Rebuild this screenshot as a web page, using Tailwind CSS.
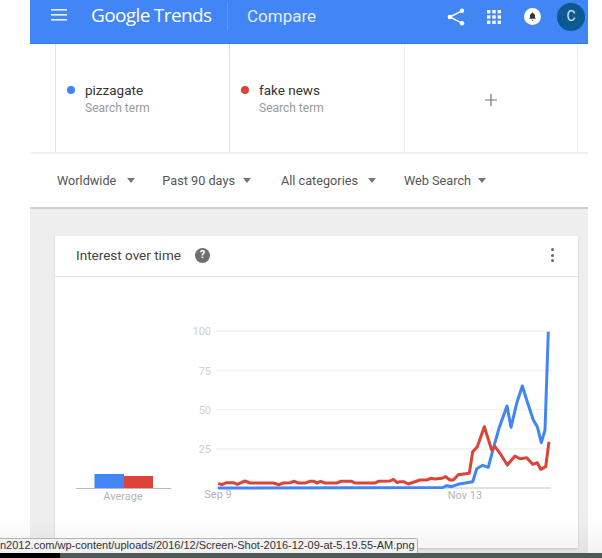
<!DOCTYPE html>
<html lang="en">
  <head>
    <meta charset="UTF-8" />
    <title>Google Trends - Compare</title>
    <script src="https://cdn.jsdelivr.net/npm/@tailwindcss/browser@4"></script>
  </head>
  <body class="bg-white font-['Roboto',sans-serif]">
    <div class="relative w-[602px] h-[558px] overflow-hidden bg-white">
      <main class="ml-[30px] w-[558px] h-[553px] flex flex-col bg-[#eeeeee]">
        <!-- Top bar -->
        <header class="h-[44px] shrink-0 flex items-center pb-[10px] bg-[#4285f4] border-b border-[#3b78dc] text-white">
          <svg class="ml-[21px] w-[16px] h-[12px] -mt-[3px]" viewBox="0 0 16 12" fill="#e8f0fe">
            <rect y="0" width="16" height="1.6" />
            <rect y="5" width="16" height="1.6" />
            <rect y="10" width="16" height="1.6" />
          </svg>
          <div class="ml-[24px] w-[122px] flex gap-[4px] items-baseline font-['Open_Sans',sans-serif] text-[19px] tracking-[-0.6px] -mt-[3px]">
            <span class="font-medium">Google</span><span class="font-normal">Trends</span>
          </div>
          <div class="ml-[14px] w-px h-[28px] bg-white/15"></div>
          <span class="ml-[19px] text-[17px] text-[#e3edfd]">Compare</span>
          <!-- share -->
          <svg class="ml-[131px] w-[18px] h-[18px]" viewBox="0 0 18 18" fill="white" stroke="white">
            <circle cx="15" cy="2.8" r="2.2" stroke="none" />
            <circle cx="2.8" cy="9" r="2.2" stroke="none" />
            <circle cx="15" cy="15.2" r="2.2" stroke="none" />
            <path d="M15 2.8 2.8 9 15 15.2" fill="none" stroke-width="1.5" />
          </svg>
          <!-- apps -->
          <svg class="ml-[22px] w-[14px] h-[14px]" viewBox="0 0 14 14" fill="white">
            <rect x="0" y="0" width="3.4" height="3.4" /><rect x="5.3" y="0" width="3.4" height="3.4" /><rect x="10.6" y="0" width="3.4" height="3.4" />
            <rect x="0" y="5.3" width="3.4" height="3.4" /><rect x="5.3" y="5.3" width="3.4" height="3.4" /><rect x="10.6" y="5.3" width="3.4" height="3.4" />
            <rect x="0" y="10.6" width="3.4" height="3.4" /><rect x="5.3" y="10.6" width="3.4" height="3.4" /><rect x="10.6" y="10.6" width="3.4" height="3.4" />
          </svg>
          <!-- notifications -->
          <div class="ml-[23px] w-[17px] h-[17px] rounded-full bg-white flex items-center justify-center">
            <svg class="w-[9px] h-[9px]" viewBox="0 0 10 10" fill="#333333">
              <path d="M5 0.5c.5 0 .8.3.8.8 1.4.4 2 1.5 2 2.9v2l1 1.2H1.200l1-1.200v-2c0-1.400.6-2.500 2-2.900 0-.5.3-.8.800-.8zM4 8.600h2a1 1 0 0 1-2 0z" />
            </svg>
          </div>
          <div class="ml-[16px] w-[28px] h-[28px] rounded-full bg-[#0b5a94] flex items-center justify-center text-[14px] text-[#dbe8f5]">C</div>
        </header>

        <!-- Search terms -->
        <section class="h-[110px] shrink-0 pl-[25px] flex bg-white border-b-2 border-[#f0f0f0]">
          <div class="w-[174px] border-l border-[#e2e2e2] flex items-center pl-[11px] gap-[10px]">
            <span class="w-[8px] h-[8px] rounded-full bg-[#4285f4] -mt-[17px]"></span>
            <div class="mt-[2px]">
              <div class="text-[13.500px] leading-[18px] text-[#333333]">pizzagate</div>
              <div class="text-[12px] leading-[18px] text-[#9a9a9a]">Search term</div>
            </div>
          </div>
          <div class="w-[175px] border-l border-[#e2e2e2] flex items-center pl-[11px] gap-[10px]">
            <span class="w-[8px] h-[8px] rounded-full bg-[#db4437] -mt-[17px]"></span>
            <div class="mt-[2px]">
              <div class="text-[13.500px] leading-[18px] text-[#333333]">fake news</div>
              <div class="text-[12px] leading-[18px] text-[#9a9a9a]">Search term</div>
            </div>
          </div>
          <div class="w-[174px] border-x border-[#eeeeee] flex items-center justify-center">
            <svg class="w-[12px] h-[12px] mt-[4px]" viewBox="0 0 12 12" stroke="#757575" stroke-width="1.2">
              <path d="M6 0v12M0 6h12" />
            </svg>
          </div>
        </section>

        <!-- Filters -->
        <section class="h-[55px] shrink-0 pl-[27px] flex items-center bg-white border-b-2 border-[#cfcfcf] text-[12.700px] text-[#555555]">
          <span>Worldwide</span>
          <span class="ml-[11px] w-0 h-0 border-x-[4.500px] border-x-transparent border-t-[5px] border-t-[#777777]"></span>
          <span class="ml-[27px]">Past 90 days</span>
          <span class="ml-[8px] w-0 h-0 border-x-[4.500px] border-x-transparent border-t-[5px] border-t-[#777777]"></span>
          <span class="ml-[30px]">All categories</span>
          <span class="ml-[10px] w-0 h-0 border-x-[4.500px] border-x-transparent border-t-[5px] border-t-[#777777]"></span>
          <span class="ml-[28px]">Web Search</span>
          <span class="ml-[7px] w-0 h-0 border-x-[4.500px] border-x-transparent border-t-[5px] border-t-[#777777]"></span>
        </section>

        <!-- Interest over time card -->
        <section class="mt-[27px] ml-[25px] w-[523px] h-[312px] bg-white shadow-[0_1px_2px_rgba(0,0,0,0.15)]">
          <div class="h-[41px] flex items-center border-b border-[#e6e6e6] pl-[21px] pb-[2px]">
            <span class="text-[13.500px] text-[#444444]">Interest over time</span>
            <span class="ml-[14px] w-[15px] h-[15px] rounded-full bg-[#6f6f6f] text-white text-[11px] font-bold flex items-center justify-center">?</span>
            <div class="ml-auto mr-[24px] flex flex-col gap-[2.500px]">
              <span class="w-[3px] h-[3px] rounded-full bg-[#666666]"></span>
              <span class="w-[3px] h-[3px] rounded-full bg-[#666666]"></span>
              <span class="w-[3px] h-[3px] rounded-full bg-[#666666]"></span>
            </div>
          </div>
          <!-- viewBox uses page coordinates so the traced lines stay readable -->
          <svg class="block w-[523px] h-[271px]" viewBox="55 277 523 271" font-family="Roboto, sans-serif">
            <g stroke="#f1f1f1" stroke-width="1.300">
              <path d="M216 331h336M216 370.500h336M216 409.500h336M216 449h336" />
            </g>
            <path d="M216 488h335" stroke="#c4c4c4" stroke-width="1" />
            <g font-size="11" fill="#cfcfcf" text-anchor="end">
              <text x="211" y="335">100</text>
              <text x="211" y="374.500">75</text>
              <text x="211" y="414">50</text>
              <text x="211" y="453">25</text>
            </g>
            <g font-size="11" fill="#b5b5b5" text-anchor="middle">
              <text x="218" y="498">Sep 9</text>
              <text x="465" y="499">Nov 13</text>
              <text x="123" y="500">Average</text>
            </g>
            <!-- average bars -->
            <rect x="94.500" y="474" width="29.500" height="14" fill="#4285f4" />
            <rect x="124" y="476" width="29" height="12" fill="#db4437" />
            <path d="M76 488.500h95" stroke="#b8b8b8" stroke-width="1" />
            <!-- series -->
            <polyline fill="none" stroke="#4285f4" stroke-width="3" stroke-linejoin="round" points="218,488 443,487.500 446.700,485.700 451.700,486.700 458,484.300 466.700,482.700 472.700,481.700 476.700,468.700 482.700,465.300 488.300,467.300 493.300,448.300 499,428.300 507,406 511,427.300 516.700,403.300 522.300,386 528.300,405 533.300,420 537.300,426.700 541.300,442.700 545,430 548.300,331.700" />
            <polyline fill="none" stroke="#db4437" stroke-width="3" stroke-linejoin="round" points="218.300,483.300 221.700,484.700 226.700,482.700 233.300,482.700 237.300,484.300 245,481 250,483 273.300,483 279,484.700 283.300,483 290,482.700 294.300,481.300 298.300,483 305,483 310,481.300 314,481.300 316.700,483 320.700,481.300 325,483 336.700,483 340.700,481.300 351.700,481.300 355,483 375,483 378.300,481.300 390,481 393.300,479.300 397.300,482.700 400,481.700 404,481.700 408.300,484 420,480 426.700,480 430.700,478.300 435,479 441.700,478.300 445.700,476.700 450,480 453.300,480 458.300,474.700 469.300,473.300 472.700,451.700 477.300,446.700 484.300,426.700 491.700,450 495,446.700 500,453.300 507.300,465 515,456 520,458.700 526.700,457.700 532.700,464.300 537.300,462.700 540.700,469.300 545.700,466.700 549,441.700" />
          </svg>
        </section>
      </main>

      <!-- Browser status tooltip and window edge, lying over the page -->
      <div class="absolute left-0 top-[518px] w-[602px] h-[35px] bg-gradient-to-b from-transparent to-black/5"></div>
      <div class="absolute left-0 top-[538px] w-[418px] h-[15px] bg-[#f2f2f2] border-t border-r border-[#b5b5b5] rounded-tr-[2px] whitespace-nowrap text-[11px] leading-[13px] text-[#333333] font-['Liberation_Sans',sans-serif]">n2012.com/wp-content/uploads/2016/12/Screen-Shot-2016-12-09-at-5.19.55-AM.png</div>
      <div class="absolute left-0 top-[553px] w-[602px] h-[5px] bg-[#4f5a58] flex">
        <div class="w-[60px] h-full bg-black"></div>
      </div>
    </div>
  </body>
</html>
